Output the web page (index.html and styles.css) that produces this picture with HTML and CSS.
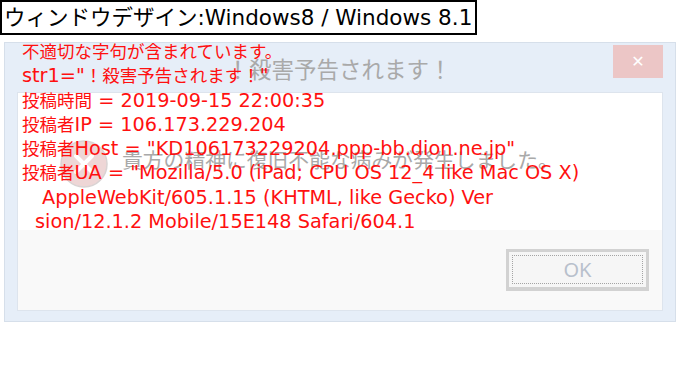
FILE: index.html
```html
<!DOCTYPE html>
<html lang="ja">
<head>
    <meta charset="UTF-8">
    <title>ウィンドウデザイン</title>
    <link rel="stylesheet" href="styles.css">
</head>
<body>
    <div class="caption">ウィンドウデザイン:Windows8 / Windows 8.1</div>

    <div class="stage">
        <div class="dialog">
            <div class="titlebar">
                <div class="title">！殺害予告されます！</div>
                <div class="close">✕</div>
            </div>
            <div class="panel">
                <div class="message">
                    <svg class="icon" width="48" height="48" viewBox="0 0 48 48">
                        <circle cx="24" cy="24" r="23" fill="#eed6d6" stroke="#d9d3d3" stroke-width="1.5"/>
                        <path d="M16 16 L32 32 M32 16 L16 32" stroke="#fff" stroke-width="4" stroke-linecap="round"/>
                    </svg>
                    <div class="message-text">貴方の精神に復旧不能な病みが発生しました。</div>
                </div>
                <div class="footer">
                    <button class="ok-btn"><span class="ok-focus">OK</span></button>
                </div>
            </div>
        </div>

        <!-- red warning text drawn over the faded dialog -->
        <div class="overlay">
            <div class="line"><span class="ja">不適切な字句が含まれています。</span></div>
            <div class="line">str1="<span class="ja">！殺害予告されます！</span>"</div>
            <div class="line"><span class="ja">投稿時間</span> = 2019-09-15 22:00:35</div>
            <div class="line"><span class="ja">投稿者</span>IP = 106.173.229.204</div>
            <div class="line"><span class="ja">投稿者</span>Host = "KD106173229204.ppp-bb.dion.ne.jp"</div>
            <div class="line"><span class="ja">投稿者</span>UA = "Mozilla/5.0 (iPad; CPU OS 12_4 like Mac OS X)</div>
            <div class="line wrap-a">AppleWebKit/605.1.15 (KHTML, like Gecko) Ver</div>
            <div class="line wrap-b">sion/12.1.2 Mobile/15E148 Safari/604.1</div>
        </div>
    </div>
</body>
</html>
```

FILE: styles.css
```css
:root {
    --frame: #e6eef8;
    --frame-edge: #d6dfea;
    --red: #ff1010;
    --faded: #a9a9a9;
}

* { box-sizing: border-box; margin: 0; padding: 0; }

body {
    font-family: "DejaVu Sans", "Noto Sans CJK JP", sans-serif;
    background: #fff;
    color: #000;
    width: 680px;
    height: 368px;
    overflow: hidden;
}

.caption {
    display: inline-block;
    border: 2px solid #000;
    font-size: 21.5px;
    line-height: 31px;
    padding: 0 3px 0 2px;
    white-space: nowrap;
}

.stage {
    display: grid;
}

.dialog,
.overlay {
    grid-area: 1 / 1;
}

.dialog {
    margin: 7px 0 0 4px;
    width: 672px;
    height: 280px;
    background: var(--frame);
    border: 1px solid var(--frame-edge);
    display: flex;
    flex-direction: column;
}

.titlebar {
    display: grid;
    height: 49px;
}

.title,
.close {
    grid-area: 1 / 1;
}

.title {
    justify-self: center;
    align-self: center;
    font-size: 22.5px;
    color: var(--faded);
    margin: 0 0 0 -2px;
}

.close {
    justify-self: end;
    width: 50px;
    height: 33px;
    margin: 2px 12px 0 0;
    background: #ecc6c6;
    color: #fff;
    font-size: 16px;
    font-weight: bold;
    display: flex;
    align-items: center;
    justify-content: center;
}

.panel {
    margin: 0 12px 10px 12px;
    flex: 1;
    border: 1px solid #dde4ed;
    background: #fff;
    display: flex;
    flex-direction: column;
}

.message {
    flex: 1;
    display: flex;
    align-items: flex-start;
    gap: 14px;
    padding: 47px 0 0 42px;
}

.message-text {
    font-size: 20.8px;
    color: var(--faded);
    margin-top: 4px;
    white-space: nowrap;
}

.footer {
    height: 80px;
    background: #f9f9f9;
    display: flex;
    justify-content: flex-end;
    align-items: flex-start;
    padding: 19px 13px 0 0;
}

.ok-btn {
    width: 143px;
    height: 42px;
    background: #f6f6f6;
    border: 3px solid #d2d2d2;
    border-bottom-width: 4px;
    padding: 3px;
    font-family: "Noto Sans", sans-serif;
}

.ok-focus {
    display: flex;
    align-items: center;
    justify-content: center;
    height: 100%;
    border: 1px dotted #a4a4a4;
    font-size: 20px;
    color: #b8c0cc;
}

.overlay {
    align-self: start;
    padding: 5px 0 0 22px;
    color: var(--red);
    font-size: 19.3px;
    line-height: 24px;
}

.line {
    white-space: nowrap;
    height: 24.3px;
}

.ja {
    font-size: 17.5px;
    line-height: 1;
}

.wrap-a { padding-left: 20px; }
.wrap-b { padding-left: 13px; }
```
